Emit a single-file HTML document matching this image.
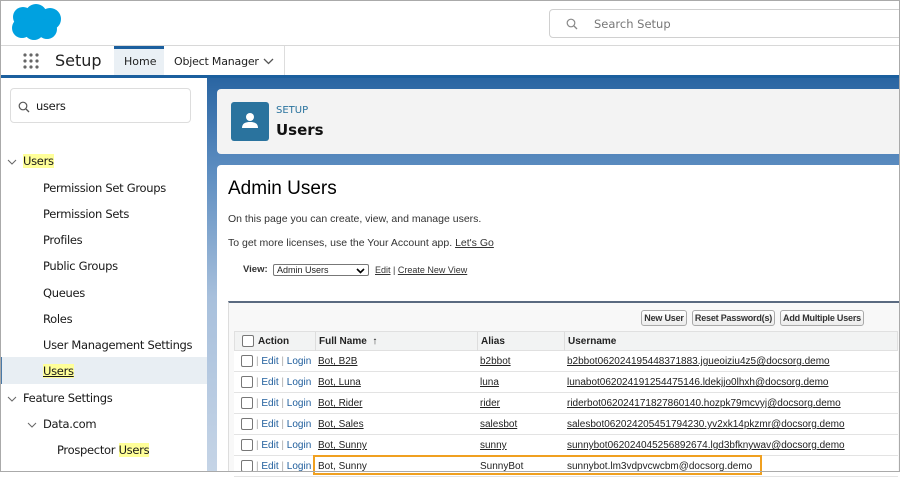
<!DOCTYPE html>
<html><head><style>
*{margin:0;padding:0;box-sizing:border-box}
body{width:900px;height:472px;overflow:hidden;font-family:"Liberation Sans",Arial,sans-serif;background:#fff;position:relative}
.abs{position:absolute}
#frame{position:absolute;left:0;top:0;width:900px;height:472px;border:1px solid #aaa;pointer-events:none;z-index:10}
.nav{font-family:"DejaVu Sans","Liberation Sans",sans-serif}
.side div{position:absolute;font-size:11.5px;color:#181818;font-family:"DejaVu Sans","Liberation Sans",sans-serif;letter-spacing:-0.3px}
.hl{background:#ffff99}
.tbl{position:absolute;left:234px;top:331px;width:664px;font-size:10px;color:#222}
.row{position:absolute;left:0;width:664px;height:21px;border-bottom:1px solid #e3e3e3;background:#fff}
.row>span{position:absolute;top:5px;white-space:nowrap}
.cb{position:absolute;left:7px;top:4px;width:12px;height:12px;border:1px solid #777;border-radius:2px;background:#fff}
.u{text-decoration:underline}
.lk{color:#1e5d9c}
.sep{color:#aaa}
.btn{position:absolute;top:310px;height:16px;border:1px solid #aaa;border-radius:3px;background:linear-gradient(#fff,#ececec);font-size:9px;font-weight:bold;color:#333;text-align:center;line-height:14px;white-space:nowrap;letter-spacing:-0.2px}
</style></head><body>
<div id="frame"></div>
<div class="abs" style="left:0;top:0;width:900px;height:46px;background:#fff;border-bottom:1px solid #d8d8d8"></div>
<svg class="abs" style="left:10px;top:3px" width="52" height="38" viewBox="0 0 52 38"><g fill="#00a1e0"><circle cx="13" cy="14" r="10"/><circle cx="26" cy="12" r="11"/><circle cx="40" cy="16" r="11"/><circle cx="12" cy="25" r="10"/><circle cx="24" cy="27" r="10"/><circle cx="37" cy="26" r="10"/></g></svg>
<div class="abs" style="left:549px;top:9px;width:360px;height:29px;border:1px solid #d0d0d0;border-radius:4px;background:#fff"></div>
<svg class="abs" style="left:566px;top:18px" width="12" height="12" viewBox="0 0 12 12"><circle cx="5" cy="5" r="3.8" fill="none" stroke="#888" stroke-width="1.2"/><path d="M8 8l3 3" stroke="#888" stroke-width="1.3"/></svg>
<div class="abs nav" style="left:594px;top:17px;font-size:11.5px;color:#777">Search Setup</div>
<div class="abs" style="left:0;top:46px;width:900px;height:29px;background:#fff"></div>
<svg class="abs" style="left:23px;top:53px" width="18" height="18"><g fill="#666"><circle cx="2" cy="2" r="1.6"/><circle cx="8" cy="2" r="1.6"/><circle cx="14" cy="2" r="1.6"/><circle cx="2" cy="8" r="1.6"/><circle cx="8" cy="8" r="1.6"/><circle cx="14" cy="8" r="1.6"/><circle cx="2" cy="14" r="1.6"/><circle cx="8" cy="14" r="1.6"/><circle cx="14" cy="14" r="1.6"/></g></svg>
<div class="abs nav" style="left:55px;top:51px;font-size:16px;color:#222">Setup</div>
<div class="abs" style="left:114px;top:46px;width:50px;height:29px;background:#eaf0f5;border-top:3px solid #1b5f9e"></div>
<div class="abs nav" style="left:124px;top:55px;font-size:11px;color:#222">Home</div>
<div class="abs nav" style="left:174px;top:55px;font-size:11px;color:#222;letter-spacing:-0.2px">Object Manager</div>
<svg class="abs" style="left:263px;top:58px" width="11" height="8"><path d="M1 1l4.5 4.5L10 1" fill="none" stroke="#555" stroke-width="1.3"/></svg>
<div class="abs" style="left:284px;top:46px;width:1px;height:29px;background:#ddd"></div>
<div class="abs" style="left:0;top:75px;width:900px;height:3px;background:#1b5f9e"></div>
<div class="abs" style="left:207px;top:78px;width:693px;height:394px;background:linear-gradient(180deg,#2a65a2 0px,#5b8cc0 90px,#a8c0dc 220px,#c5d4e6 394px)"></div>
<div class="abs side" style="left:0;top:78px;width:207px;height:394px;background:#fff">
<div style="left:10px;top:10px;width:181px;height:35px;border:1px solid #ddd;border-radius:4px;"></div>
<div style="left:36px;top:21px;font-size:11.5px">users</div>
<div style="left:0;top:279px;width:207px;height:27px;background:#e8eef3;border-left:2px solid #4a7aa8"></div>
<div style="left:43px;top:286px" class="u hl">Users</div>
<div style="left:23px;top:76px" class="hl">Users</div>
<div style="left:43px;top:103px">Permission Set Groups</div>
<div style="left:43px;top:129px">Permission Sets</div>
<div style="left:43px;top:155px">Profiles</div>
<div style="left:43px;top:181px">Public Groups</div>
<div style="left:43px;top:208px">Queues</div>
<div style="left:43px;top:234px">Roles</div>
<div style="left:43px;top:260px">User Management Settings</div>
<div style="left:23px;top:313px">Feature Settings</div>
<div style="left:43px;top:339px">Data.com</div>
<div style="left:57px;top:365px">Prospector <span class="hl">Users</span></div>
</div>
<svg class="abs" style="left:18px;top:101px" width="12" height="12" viewBox="0 0 12 12"><circle cx="5" cy="5" r="3.8" fill="none" stroke="#555" stroke-width="1.2"/><path d="M8 8l3 3" stroke="#555" stroke-width="1.3"/></svg>
<svg class="abs" style="left:7px;top:159px" width="10" height="7"><path d="M1 1l4 4 4-4" fill="none" stroke="#666" stroke-width="1"/></svg>
<svg class="abs" style="left:7px;top:396px" width="10" height="7"><path d="M1 1l4 4 4-4" fill="none" stroke="#666" stroke-width="1"/></svg>
<svg class="abs" style="left:27px;top:422px" width="10" height="7"><path d="M1 1l4 4 4-4" fill="none" stroke="#666" stroke-width="1"/></svg>
<div class="abs" style="left:217px;top:89px;width:690px;height:65px;background:#f3f3f3;border-radius:4px"></div>
<div class="abs" style="left:231px;top:102px;width:38px;height:39px;background:#2a739e;border-radius:3px"></div>
<svg class="abs" style="left:240px;top:111px" width="20" height="20"><circle cx="10" cy="6" r="4" fill="#fff"/><path d="M2 17c0-5 4-6 8-6s8 1 8 6z" fill="#fff"/></svg>
<div class="abs nav" style="left:276px;top:105px;font-size:10px;color:#2a739e">SETUP</div>
<div class="abs nav" style="left:276px;top:121px;font-size:15px;font-weight:bold;color:#111">Users</div>
<div class="abs" style="left:217px;top:165px;width:690px;height:310px;background:#fff;border-radius:4px"></div>
<div class="abs" style="left:228px;top:178px;font-size:19px;color:#000">Admin Users</div>
<div class="abs" style="left:228px;top:213px;font-size:10.5px;color:#333">On this page you can create, view, and manage users.</div>
<div class="abs" style="left:228px;top:237px;font-size:10.5px;color:#333">To get more licenses, use the Your Account app. <span class="u">Let's Go</span></div>
<div class="abs" style="left:243px;top:264px;font-size:9.5px;font-weight:bold;color:#333">View:</div>
<div class="abs" style="left:273px;top:264px;width:96px;height:12px;border:1px solid #777;border-radius:2px;font-size:9px;padding-left:3px;line-height:10px;color:#222">Admin Users</div>
<svg class="abs" style="left:356px;top:268px" width="9" height="6"><path d="M1 1l3.5 3.5L8 1" fill="none" stroke="#000" stroke-width="1.6"/></svg>
<div class="abs" style="left:375px;top:265px;font-size:9px;color:#333"><span class="u">Edit</span> | <span class="u">Create New View</span></div>
<div class="abs" style="left:228px;top:301px;width:672px;height:171px;background:#f8f8f8;border-top:2px solid #5a6a80;border-left:1px solid #ddd"></div>
<div class="btn" style="left:641px;width:46px">New User</div>
<div class="btn" style="left:692px;width:83px">Reset Password(s)</div>
<div class="btn" style="left:780px;width:84px">Add Multiple Users</div>
<div class="tbl">
<div class="row" style="top:0;height:20px;background:#f2f3f3;border:1px solid #e0e0e0;font-weight:bold">
<div class="cb" style="top:3px"></div><span style="left:23px;top:4px">Action</span>
<span style="left:84px;top:4px">Full Name &nbsp;↑</span><span style="left:246px;top:4px">Alias</span><span style="left:333px;top:4px">Username</span>
<div class="abs" style="left:80px;top:0;width:1px;height:19px;background:#ddd"></div>
<div class="abs" style="left:242px;top:0;width:1px;height:19px;background:#ddd"></div>
<div class="abs" style="left:329px;top:0;width:1px;height:19px;background:#ddd"></div>
</div>
<div class="row" style="top:20px"><div class="cb"></div><span style="left:22px" class="lk"><span class="sep">|</span> Edit <span class="sep">|</span> Login</span><span class="u" style="left:84px">Bot, B2B</span><span class="u" style="left:246px">b2bbot</span><span class="u" style="left:333px">b2bbot062024195448371883.jgueoiziu4z5@docsorg.demo</span></div>
<div class="row" style="top:41px"><div class="cb"></div><span style="left:22px" class="lk"><span class="sep">|</span> Edit <span class="sep">|</span> Login</span><span class="u" style="left:84px">Bot, Luna</span><span class="u" style="left:246px">luna</span><span class="u" style="left:333px">lunabot062024191254475146.ldekjjo0lhxh@docsorg.demo</span></div>
<div class="row" style="top:62px"><div class="cb"></div><span style="left:22px" class="lk"><span class="sep">|</span> Edit <span class="sep">|</span> Login</span><span class="u" style="left:84px">Bot, Rider</span><span class="u" style="left:246px">rider</span><span class="u" style="left:333px">riderbot062024171827860140.hozpk79mcvyj@docsorg.demo</span></div>
<div class="row" style="top:83px"><div class="cb"></div><span style="left:22px" class="lk"><span class="sep">|</span> Edit <span class="sep">|</span> Login</span><span class="u" style="left:84px">Bot, Sales</span><span class="u" style="left:246px">salesbot</span><span class="u" style="left:333px">salesbot062024205451794230.yv2xk14pkzmr@docsorg.demo</span></div>
<div class="row" style="top:104px"><div class="cb"></div><span style="left:22px" class="lk"><span class="sep">|</span> Edit <span class="sep">|</span> Login</span><span class="u" style="left:84px">Bot, Sunny</span><span class="u" style="left:246px">sunny</span><span class="u" style="left:333px">sunnybot062024045256892674.lgd3bfknywav@docsorg.demo</span></div>
<div class="row" style="top:125px"><div class="cb"></div><span style="left:22px" class="lk"><span class="sep">|</span> Edit <span class="sep">|</span> Login</span><span style="left:84px">Bot, Sunny</span><span style="left:246px">SunnyBot</span><span style="left:333px">sunnybot.lm3vdpvcwcbm@docsorg.demo</span></div>
</div>
<div class="abs" style="left:313px;top:455px;width:449px;height:20px;border:2px solid #f0a020"></div>
</body></html>
